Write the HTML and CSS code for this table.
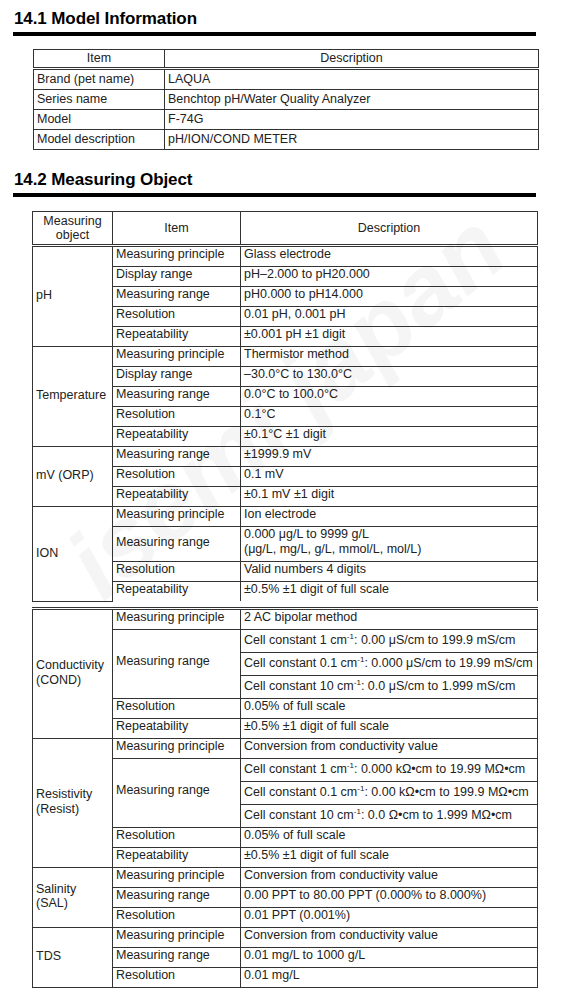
FILE: index.html
```html
<!DOCTYPE html>
<html lang="en">
<head>
<meta charset="utf-8">
<title>Model Information / Measuring Object</title>
<link rel="stylesheet" href="styles.css">
</head>
<body>
<div class="page">
  <h2 class="sec-title">14.1 Model Information</h2>
  <table class="tbl tbl-model">
    <colgroup><col class="m-item"><col class="m-desc"></colgroup>
    <thead>
      <tr><th>Item</th><th>Description</th></tr>
    </thead>
    <tbody>
      <tr><td>Brand (pet name)</td><td>LAQUA</td></tr>
      <tr><td>Series name</td><td>Benchtop pH/Water Quality Analyzer</td></tr>
      <tr><td>Model</td><td>F-74G</td></tr>
      <tr><td>Model description</td><td>pH/ION/COND METER</td></tr>
    </tbody>
  </table>

  <h2 class="sec-title sec2">14.2 Measuring Object</h2>
  <table class="tbl tbl-meas part-a">
    <colgroup><col class="c-obj"><col class="c-item"><col class="c-desc"></colgroup>
    <thead>
      <tr><th>Measuring<br>object</th><th>Item</th><th>Description</th></tr>
    </thead>
    <tbody>
      <tr><td class="obj" rowspan="5">pH</td><td>Measuring principle</td><td>Glass electrode</td></tr>
      <tr><td>Display range</td><td>pH–2.000 to pH20.000</td></tr>
      <tr><td>Measuring range</td><td>pH0.000 to pH14.000</td></tr>
      <tr><td>Resolution</td><td>0.01 pH, 0.001 pH</td></tr>
      <tr><td>Repeatability</td><td>±0.001 pH ±1 digit</td></tr>

      <tr><td class="obj" rowspan="5">Temperature</td><td>Measuring principle</td><td>Thermistor method</td></tr>
      <tr><td>Display range</td><td>–30.0°C to 130.0°C</td></tr>
      <tr><td>Measuring range</td><td>0.0°C to 100.0°C</td></tr>
      <tr><td>Resolution</td><td>0.1°C</td></tr>
      <tr><td>Repeatability</td><td>±0.1°C ±1 digit</td></tr>

      <tr><td class="obj" rowspan="3">mV (ORP)</td><td>Measuring range</td><td>±1999.9 mV</td></tr>
      <tr><td>Resolution</td><td>0.1 mV</td></tr>
      <tr><td>Repeatability</td><td>±0.1 mV ±1 digit</td></tr>

      <tr><td class="obj" rowspan="4">ION</td><td>Measuring principle</td><td>Ion electrode</td></tr>
      <tr><td>Measuring range</td><td>0.000 μg/L to 9999 g/L<br>(μg/L, mg/L, g/L, mmol/L, mol/L)</td></tr>
      <tr><td>Resolution</td><td>Valid numbers 4 digits</td></tr>
      <tr class="cut"><td>Repeatability</td><td>±0.5% ±1 digit of full scale</td></tr>
    </tbody>
  </table>

  <table class="tbl tbl-meas part-b">
    <colgroup><col class="c-obj"><col class="c-item"><col class="c-desc"></colgroup>
    <tbody>
      <tr class="first"><td class="obj" rowspan="6">Conductivity<br>(COND)</td><td>Measuring principle</td><td>2 AC bipolar method</td></tr>
      <tr class="tall"><td rowspan="3">Measuring range</td><td>Cell constant 1 cm<span class="sup">-1</span>: 0.00 μS/cm to 199.9 mS/cm</td></tr>
      <tr class="tall"><td>Cell constant 0.1 cm<span class="sup">-1</span>: 0.000 μS/cm to 19.99 mS/cm</td></tr>
      <tr class="tall"><td>Cell constant 10 cm<span class="sup">-1</span>: 0.0 μS/cm to 1.999 mS/cm</td></tr>
      <tr><td>Resolution</td><td>0.05% of full scale</td></tr>
      <tr><td>Repeatability</td><td>±0.5% ±1 digit of full scale</td></tr>

      <tr><td class="obj" rowspan="6">Resistivity<br>(Resist)</td><td>Measuring principle</td><td>Conversion from conductivity value</td></tr>
      <tr class="tall"><td rowspan="3">Measuring range</td><td>Cell constant 1 cm<span class="sup">-1</span>: 0.000 kΩ•cm to 19.99 MΩ•cm</td></tr>
      <tr class="tall"><td>Cell constant 0.1 cm<span class="sup">-1</span>: 0.00 kΩ•cm to 199.9 MΩ•cm</td></tr>
      <tr class="tall"><td>Cell constant 10 cm<span class="sup">-1</span>: 0.0 Ω•cm to 1.999 MΩ•cm</td></tr>
      <tr><td>Resolution</td><td>0.05% of full scale</td></tr>
      <tr><td>Repeatability</td><td>±0.5% ±1 digit of full scale</td></tr>

      <tr><td class="obj" rowspan="3">Salinity<br>(SAL)</td><td>Measuring principle</td><td>Conversion from conductivity value</td></tr>
      <tr><td>Measuring range</td><td>0.00 PPT to 80.00 PPT (0.000% to 8.000%)</td></tr>
      <tr><td>Resolution</td><td>0.01 PPT (0.001%)</td></tr>

      <tr><td class="obj" rowspan="3">TDS</td><td>Measuring principle</td><td>Conversion from conductivity value</td></tr>
      <tr><td>Measuring range</td><td>0.01 mg/L to 1000 g/L</td></tr>
      <tr><td>Resolution</td><td>0.01 mg/L</td></tr>
    </tbody>
  </table>

  <div class="watermark" aria-hidden="true">isemi japan</div>
</div>
</body>
</html>
```

FILE: styles.css
```css
html, body {
  margin: 0;
  padding: 0;
  background: #fff;
}

body {
  font-family: "Liberation Sans", Arial, sans-serif;
  color: #222;
}

.page {
  position: relative;
  width: 571px;
  min-height: 1000px;
  overflow: hidden;
}

.sec-title {
  margin: 0 35px 0 13px;
  padding: 9px 0 3px 1px;
  font-size: 17px;
  line-height: 20px;
  font-weight: bold;
  letter-spacing: -0.1px;
  color: #000;
  border-bottom: 4px solid #000;
}

.sec2 {
  margin-top: 11px;
}

.tbl {
  border-collapse: collapse;
  table-layout: fixed;
  font-size: 12.5px;
  line-height: 15px;
  color: #222;
}

.tbl th,
.tbl td {
  border: 1px solid #333;
  padding: 0 3px 4px;
  text-align: left;
  vertical-align: middle;
  white-space: nowrap;
  overflow: hidden;
}

.tbl th {
  font-weight: normal;
  text-align: center;
}

/* 14.1 table */
.tbl-model {
  margin: 13px 0 0 33px;
  width: 505px;
}

.m-item { width: 131px; }
.m-desc { width: 374px; }

.tbl-model th {
  padding: 1px 3px;
  border-bottom: 3px double #333;
}

.tbl-model td {
  padding: 2px 3px;
}

/* 14.2 table */
.tbl-meas {
  margin-left: 32px;
  width: 505px;
}

.c-obj { width: 80px; }
.c-item { width: 128px; }
.c-desc { width: 297px; }

.part-a {
  margin-top: 14px;
}

.part-a th {
  padding: 2px 3px;
  line-height: 14px;
  border-bottom: 3px double #333;
}

.part-a .cut td {
  border-bottom-style: hidden;
}

.part-b {
  margin-top: 5px;
}

.part-b .first td {
  border-top: 3px double #333;
}

.tbl td.obj {
  line-height: 14.5px;
  padding: 0 2px 2px 3px;
}

.tbl tr.tall td {
  padding-top: 3px;
  padding-bottom: 4px;
}

.tbl tr.tall td[rowspan] {
  padding-top: 0;
}

.sup {
  font-size: 8px;
  line-height: 0;
  vertical-align: 5px;
}

.watermark {
  position: absolute;
  left: 18px;
  top: 355px;
  width: 535px;
  text-align: center;
  font-size: 98px;
  line-height: 100px;
  font-weight: bold;
  font-style: italic;
  font-family: "Liberation Sans", Arial, sans-serif;
  color: rgba(0, 0, 0, 0.04);
  transform: rotate(-40deg);
  transform-origin: 50% 50%;
  white-space: nowrap;
  pointer-events: none;
}
```
